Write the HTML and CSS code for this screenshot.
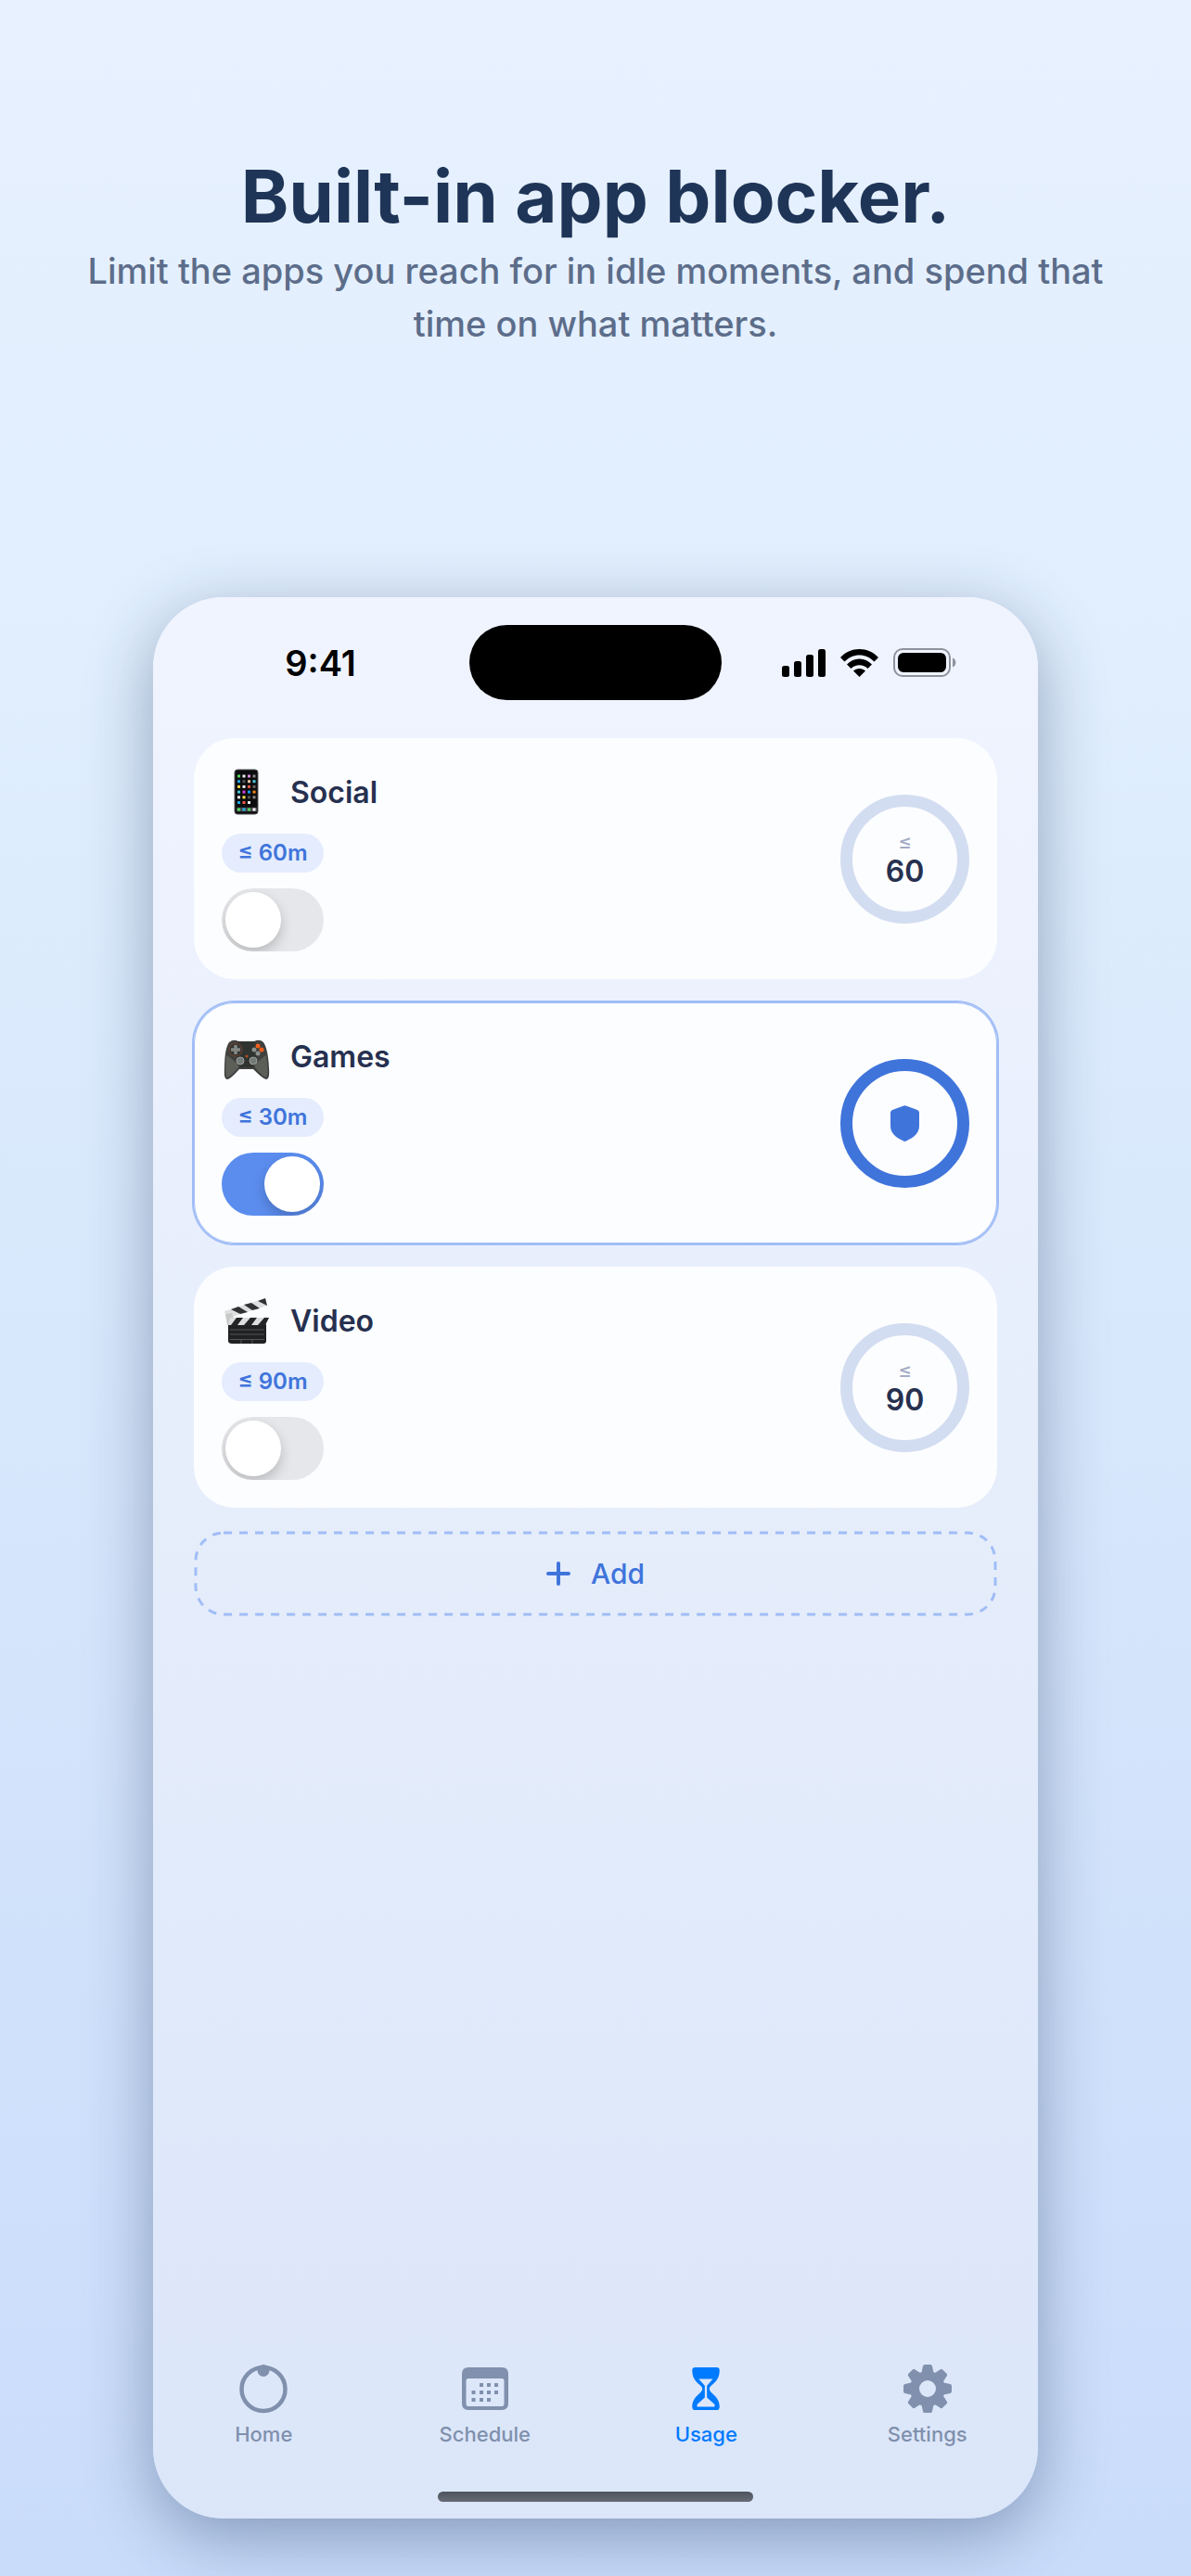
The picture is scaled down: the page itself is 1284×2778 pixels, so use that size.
FILE: index.html
```html
<!DOCTYPE html>
<html lang="en">
<head>
  <meta charset="UTF-8" />
  <meta name="viewport" content="width=device-width, initial-scale=1.0" />
  <title>Built-in app blocker</title>
  <link rel="stylesheet" href="styles.css">
</head>
<body>
  <header class="intro">
    <h1>Built-in app blocker.</h1>
    <p>Limit the apps you reach for in idle moments, and spend that time on what matters.</p>
  </header>

  <div class="phone">
    <div class="status-bar">
      <span class="time">9:41</span>
      <span class="island"></span>
      <span class="status-icons">
        <svg width="47" height="30" viewBox="0 0 47 30" aria-hidden="true">
          <rect x="0" y="18" width="8" height="12" rx="2.5" />
          <rect x="13" y="13" width="8" height="17" rx="2.5" />
          <rect x="26" y="6" width="8" height="24" rx="2.5" />
          <rect x="39" y="0" width="8" height="30" rx="2.5" />
        </svg>
        <svg width="41" height="30" viewBox="0 0 41 30" aria-hidden="true">
          <path d="M0 9C11-3 30-3 41 9L36.500 13.500C27.500 4 13.500 4 4.500 13.500Z" />
          <path d="M7 16.500C14.500 8.500 26.500 8.500 34 16.500L29.500 21C24.500 16 16.500 16 11.500 21Z" />
          <path d="M14 23.500C17.500 20 23.500 20 27 23.500L20.500 30Z" />
        </svg>
        <svg width="68" height="31" viewBox="0 0 68 31" aria-hidden="true">
          <rect x="1" y="1" width="60" height="29" rx="9" fill="none" stroke="#8f929c" stroke-width="2" />
          <rect x="5" y="5" width="52" height="21" rx="6" />
          <path d="M64 10.500C68.500 12 68.500 19 64 20.500Z" fill="#8f929c" />
        </svg>
      </span>
    </div>

    <main class="limits">
      <section class="card">
        <div class="card-info">
          <label class="card-title" for="social">
            <svg class="emoji" viewBox="0 0 52 52" aria-hidden="true">
              <rect x="14" y="2" width="25" height="48" rx="3" fill="#0c0c0e" stroke="#55565a" />
              <g stroke-width="3">
                <path d="M17 9h3" stroke="#58d563" /><path d="M22.500 9h3" stroke="#eee" /><path d="M28 9h3" stroke="#dc8ee0" /><path d="M33.500 9h3" stroke="#888" />
                <path d="M17 14.700h3" stroke="#20a8ef" /><path d="M22.500 14.700h3" stroke="#555" /><path d="M28 14.700h3" stroke="#e3c49d" /><path d="M33.500 14.700h3" stroke="#49cbe0" />
                <path d="M17 20.400h3" stroke="#f1d943" /><path d="M22.500 20.400h3" stroke="#eee" /><path d="M28 20.400h3" stroke="#ee5648" /><path d="M33.500 20.400h3" stroke="#666" />
                <path d="M17 26.100h3" stroke="#3dc8d8" /><path d="M22.500 26.100h3" stroke="#d33fdc" /><path d="M28 26.100h3" stroke="#159cee" /><path d="M33.500 26.100h3" stroke="#f68b13" />
                <path d="M17 31.800h3" stroke="#eee" /><path d="M22.500 31.800h3" stroke="#f1e24c" /><path d="M28 31.800h3" stroke="#555" /><path d="M33.500 31.800h3" stroke="#888" />
                <path d="M17 37.500h3" stroke="#1ba7e8" /><path d="M22.500 37.500h3" stroke="#ee5648" /><path d="M28 37.500h3" stroke="#eee" />
              </g>
              <path d="M16 45h22" stroke="#45464a" stroke-width="4.500" />
              <path d="M17 45h3M28 45h3" stroke="#50d35c" stroke-width="3" />
              <path d="M22.500 45h3" stroke="#20b8ef" stroke-width="3" />
              <path d="M33.500 45h3" stroke="#fff" stroke-width="3" />
            </svg>
            Social
          </label>
          <span class="pill">≤ 60m</span>
          <input class="switch" type="checkbox" id="social" />
        </div>
        <div class="ring"><small>≤</small><b>60</b></div>
      </section>

      <section class="card active">
        <div class="card-info">
          <label class="card-title" for="games">
            <svg class="emoji" viewBox="0 -3 52 52" aria-hidden="true">
              <path d="M8 8Q13 4 18 7H35Q41 4 45 8Q50 15 51 36Q52 48 48 48Q45 48 34 37H19Q9 48 6 48Q2 48 3 36Q3 15 8 8Z" fill="#3f413f" />
              <path d="M18 7H35Q41 14 37 26L36 35H17L16 26Q12 15 18 7Z" fill="#303431" />
              <path d="M5 22Q11 25 19 34Q9 46 6 46Q3 44 5 22ZM48 22Q42 25 35 34Q45 46 48 46Q51 44 48 22Z" fill="#5c5e58" />
              <circle cx="15" cy="16" r="7" fill="#343635" stroke="#75462f" />
              <path d="M15 11V21M10 16H20" stroke="#858985" stroke-width="3.500" />
              <circle cx="39" cy="12" r="2.500" fill="#f1601c" />
              <circle cx="43" cy="16" r="2.500" fill="#f1601c" />
              <circle cx="35" cy="16" r="2.500" fill="#8c908d" />
              <circle cx="39" cy="20" r="2.500" fill="#8c908d" />
              <circle cx="20" cy="28" r="4" fill="#737a78" stroke="#9a9f9c" />
              <circle cx="34" cy="28" r="4" fill="#737a78" stroke="#9a9f9c" />
              <circle cx="27" cy="23" r="1.500" fill="#b54d20" />
            </svg>
            Games
          </label>
          <span class="pill">≤ 30m</span>
          <input class="switch" type="checkbox" id="games" checked />
        </div>
        <div class="ring">
          <svg width="31" height="39" viewBox="0 0 31 39" aria-hidden="true">
            <path d="M13.500 .7Q15.500 -.3 17.500 .7L29 5Q31 6 31 8V22C31 30 26 34 17 38.500Q15.500 39.300 14 38.500C5 34 0 30 0 22V8Q0 6 2 5Z" />
          </svg>
        </div>
      </section>

      <section class="card">
        <div class="card-info">
          <label class="card-title" for="video">
            <svg class="emoji" viewBox="0 -2 52 52" aria-hidden="true">
              <path d="M3 14L47 0L49 8L5 22Z" fill="#dedfdf" />
              <path d="M10 12L18 9L28 15L20 17ZM24 7L32 5L41 11L33 13ZM39 3L47 0L49 8Z" fill="#303233" />
              <path d="M4 17L11 16L15 28L6 29Z" fill="#c7c9c9" />
              <path d="M7 28H48V46Q48 49 45 49H11Q7 49 7 46Z" fill="#202122" />
              <path d="M9 21H51L47 29H7Z" fill="#dddede" />
              <path d="M16 21H23L17 29H10ZM31 21H38L32 29H24ZM46 21H51L47 29H39Z" fill="#242526" />
              <path d="M9 34H46M9 39H46M9 44.500H46M21 45V49M33 45V49" stroke="#555657" />
            </svg>
            Video
          </label>
          <span class="pill">≤ 90m</span>
          <input class="switch" type="checkbox" id="video" />
        </div>
        <div class="ring"><small>≤</small><b>90</b></div>
      </section>

      <button class="add" type="button">
        <svg class="dashes" aria-hidden="true"><rect width="100%" height="100%" rx="30" /></svg>
        <svg width="26" height="26" viewBox="0 0 26 26" aria-hidden="true">
          <path d="M13 2V24M2 13H24" stroke="currentColor" stroke-width="4" stroke-linecap="round" />
        </svg>
        Add
      </button>
    </main>

    <nav class="tabs">
      <a href="#home">
        <svg width="52" height="54" viewBox="0 0 52 54" fill="none" aria-hidden="true">
          <circle cx="26" cy="27.500" r="23.500" stroke="currentColor" stroke-width="4.500" />
          <circle cx="26" cy="7.500" r="6.500" fill="currentColor" />
        </svg>
        Home
      </a>
      <a href="#schedule">
        <svg width="50" height="54" viewBox="0 0 50 54" aria-hidden="true">
          <path fill="currentColor" fill-rule="evenodd" d="M7 4H43Q50 4 50 11V43Q50 50 43 50H7Q0 50 0 43V11Q0 4 7 4ZM7 16Q4.500 16 4.500 18.500V43Q4.500 46 7 46H43Q45.500 46 45.500 43V18.500Q45.500 16 43 16Z" />
          <path d="M21 21V25M29 21V25M37 21V25M12.500 29V33M21 29V33M29 29V33M37 29V33M12.500 37V41M21 37V41M29 37V41" stroke="currentColor" stroke-width="4" />
        </svg>
        Schedule
      </a>
      <a href="#usage" class="current" aria-current="page">
        <svg width="30" height="54" viewBox="0 -12 89 163" aria-hidden="true">
          <path fill="currentColor" fill-rule="evenodd" d="M10 0H79Q89 0 89 10C89 34 78 46 66 56C60 61 56 65 56 70C56 75 60 80 66 85C78 96 89 108 89 128Q89 139 79 139H10Q0 139 0 128C0 108 11 96 23 85C29 80 33 75 33 70C33 65 29 61 23 56C11 46 0 34 0 10Q0 0 10 0ZM21 38L41 60V98L16 121V128H73V121L48 98V60L67 38Z" />
        </svg>
        Usage
      </a>
      <a href="#settings">
        <svg width="52" height="54" viewBox="-26 -27 52 54" fill="none" aria-hidden="true">
          <defs><path id="teeth" d="M-3-24H3L5-15H-5ZM-3 24H3L5 15H-5Z" fill="currentColor" stroke="currentColor" stroke-width="4" stroke-linejoin="round" /></defs>
          <circle r="14" stroke="currentColor" stroke-width="10" />
          <use href="#teeth" />
          <use href="#teeth" transform="rotate(45)" />
          <use href="#teeth" transform="rotate(90)" />
          <use href="#teeth" transform="rotate(135)" />
        </svg>
        Settings
      </a>
    </nav>
    <div class="home-bar"></div>
  </div>
</body>
</html>
```

FILE: styles.css
```css
* {
  box-sizing: border-box;
}
body {
  margin: 0;
  min-height: 100vh;
  padding: 162px 0 62px;
  display: flex;
  flex-direction: column;
  font-family: Inter, "Liberation Sans", sans-serif;
  background: linear-gradient(#e8f1ff, #e0eefd 25%, #c9dcfa);
}

.intro {
  padding: 0 80px;
  text-align: center;
}
h1 {
  margin: 0 0 2px;
  font-size: 78px;
  line-height: 100px;
  font-weight: 700;
  color: #1f3557;
}
.intro p {
  margin: 0;
  font-size: 38px;
  line-height: 57px;
  font-weight: 500;
  color: #5c6d8a;
}

.phone {
  flex: 1;
  margin: 266px 165px 0;
  display: flex;
  flex-direction: column;
  border-radius: 76px;
  background: linear-gradient(#f0f4ff, #e5edfb 50%, #dbe6f9);
  box-shadow: 0 20px 70px rgba(30, 53, 95, 0.4);
}

/* status bar */
.status-bar {
  display: grid;
  grid-template-columns: 1fr 272px 1fr;
  align-items: center;
  padding: 30px 0 41px;
}
.time {
  padding-left: 20px;
  text-align: center;
  font-size: 38px;
  font-weight: 600;
}
.island {
  height: 81px;
  border-radius: 41px;
  background: #000;
}
.status-icons {
  display: flex;
  align-items: center;
  justify-content: center;
  gap: 16px;
  padding-right: 24px;
}

/* cards */
.limits {
  flex: 1;
  display: flex;
  flex-direction: column;
  gap: 25px;
  padding: 0 44px;
}
.card {
  display: flex;
  align-items: center;
  justify-content: space-between;
  padding: 30px;
  border-radius: 44px;
  background: #fcfdff;
}
.card.active {
  box-shadow: 0 0 0 2px #a0bdf6, inset 0 0 0 1px #a0bdf6;
}
.card-info {
  display: flex;
  flex-direction: column;
  align-items: flex-start;
  gap: 17px;
}
.card-title {
  display: flex;
  align-items: center;
  gap: 22px;
  height: 56px;
  font-size: 32px;
  font-weight: 600;
  color: #26304f;
}
.emoji {
  width: 52px;
  height: 52px;
}
.pill {
  width: 110px;
  border-radius: 21px;
  background: #e4ecfd;
  color: #3f74db;
  font-size: 24px;
  line-height: 42px;
  font-weight: 600;
  text-align: center;
}
.switch {
  appearance: none;
  margin: 0;
  width: 110px;
  height: 68px;
  padding: 4px;
  display: flex;
  border-radius: 34px;
  background: #e6e7ea;
  overflow: hidden;
  cursor: pointer;
}
.switch::before {
  content: "";
  width: 60px;
  height: 60px;
  border-radius: 50%;
  background: #fff;
  box-shadow: 0 6px 14px rgba(0, 0, 0, 0.2);
}
.switch:checked {
  justify-content: flex-end;
  background: #5b8def;
}
.ring {
  display: flex;
  flex-direction: column;
  align-items: center;
  justify-content: center;
  width: 139px;
  height: 139px;
  border: 13px solid #d3ddf1;
  border-radius: 50%;
  color: #26304f;
}
.ring small {
  padding-top: 4px;
  font-size: 22px;
  line-height: 24px;
  font-weight: 500;
  color: #a3acc4;
}
.ring b {
  font-size: 32px;
  line-height: 40px;
  font-weight: 600;
}
.active .ring {
  border-color: #3f74db;
}
.ring svg {
  fill: #3f74db;
}
.add {
  position: relative;
  display: flex;
  align-items: center;
  justify-content: center;
  gap: 22px;
  height: 92px;
  padding: 0;
  border: none;
  background: none;
  color: #3f74db;
  font: 500 30px Inter, "Liberation Sans", sans-serif;
  cursor: pointer;
}
.dashes {
  position: absolute;
  inset: 2px;
  width: calc(100% - 4px);
  height: calc(100% - 4px);
  overflow: visible;
}
.dashes rect {
  fill: none;
  stroke: #a0bdf6;
  stroke-width: 3;
  stroke-dasharray: 9 8;
}

/* bottom tabs */
.tabs {
  display: grid;
  grid-template-columns: repeat(4, 1fr);
}
.tabs a {
  display: flex;
  flex-direction: column;
  align-items: center;
  gap: 8px;
  font-size: 22px;
  line-height: 28px;
  font-weight: 500;
  color: #8090ad;
  text-decoration: none;
}
.tabs .current {
  color: #007aff;
}
.home-bar {
  align-self: center;
  width: 340px;
  height: 11px;
  margin: 48px 0 18px;
  border-radius: 6px;
  background: linear-gradient(#4e535d, #666b75);
}
```
